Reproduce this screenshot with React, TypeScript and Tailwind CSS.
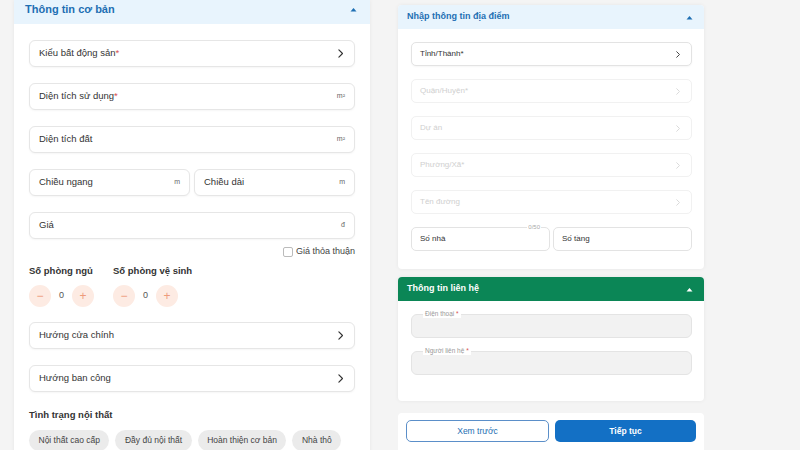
import React from 'react';

const Caret = ({ className = '' }: { className?: string }) => (
  <svg width="7" height="5" viewBox="0 0 7 5" className={className}>
    <path d="M0.5 4.5 L3.5 1 L6.5 4.5 Z" fill="currentColor" />
  </svg>
);

const Chevron = ({ className = '', size = 8 }: { className?: string; size?: number }) => (
  <svg width={size * 0.6} height={size} viewBox="0 0 6 10" className={className}>
    <path d="M1 1 L5 5 L1 9" fill="none" stroke="currentColor" strokeWidth="1.3" strokeLinecap="round" strokeLinejoin="round" />
  </svg>
);

const SelectField = ({ label, required }: { label: string; required?: boolean }) => (
  <div className="flex h-[27px] shrink-0 items-center justify-between rounded-[6px] border border-[#e6e6e6] bg-white pl-[9px] pr-[11px] shadow-[0_1px_2px_rgba(0,0,0,0.04)]">
    <span className="text-[9.5px] text-[#333]">
      {label}
      {required && <span className="text-[#d9534f]">*</span>}
    </span>
    <Chevron className="text-[#333]" size={9} />
  </div>
);

const UnitField = ({ label, unit, required, className = '' }: { label: string; unit: React.ReactNode; required?: boolean; className?: string }) => (
  <div className={`flex h-[27px] shrink-0 items-center justify-between rounded-[6px] border border-[#e6e6e6] bg-white pl-[9px] pr-[9px] shadow-[0_1px_2px_rgba(0,0,0,0.04)] ${className}`}>
    <span className="text-[9.5px] text-[#333]">
      {label}
      {required && <span className="text-[#d9534f]">*</span>}
    </span>
    <span className="text-[7px] text-[#666]">{unit}</span>
  </div>
);

const Counter = ({ label }: { label: string }) => (
  <div className="flex flex-col">
    <span className="text-[9.5px] font-semibold text-[#333]">{label}</span>
    <div className="mt-[7px] flex items-center">
      <div className="flex h-[22px] w-[22px] items-center justify-center rounded-full bg-[#fdebe3] text-[12px] leading-none text-[#ee9a7c]">−</div>
      <span className="w-[21px] text-center text-[9px] text-[#555]">0</span>
      <div className="flex h-[22px] w-[22px] items-center justify-center rounded-full bg-[#fdebe3] text-[12px] leading-none text-[#ee9a7c]">+</div>
    </div>
  </div>
);

const LocField = ({ label, disabled }: { label: string; disabled?: boolean }) => (
  <div className={`flex h-[24px] shrink-0 items-center justify-between rounded-[5px] border bg-white pl-[8px] pr-[11px] ${disabled ? 'border-[#f1f1f1]' : 'border-[#e3e3e3] shadow-[0_1px_2px_rgba(0,0,0,0.04)]'}`}>
    <span className={`text-[8px] ${disabled ? 'text-[#cfcfcf]' : 'text-[#333]'}`}>{label}</span>
    <Chevron className={disabled ? 'text-[#d6d6d6]' : 'text-[#333]'} size={7} />
  </div>
);

const ContactField = ({ label }: { label: string }) => (
  <div className="relative h-[24px] shrink-0 rounded-[6px] border border-[#e4e4e4] bg-[#f2f2f2]">
    <span className="absolute -top-[4px] left-[11px] bg-white px-[2px] text-[6.5px] leading-none text-[#999]">
      {label} <span className="text-[#d9534f]">*</span>
    </span>
  </div>
);

export default function App() {
  const chips = ['Nội thất cao cấp', 'Đầy đủ nội thất', 'Hoàn thiện cơ bản', 'Nhà thô'];

  return (
    <div className="flex h-[450px] w-[800px] items-start overflow-hidden bg-[#f4f4f4]" style={{ fontFamily: '"Liberation Sans", Arial, sans-serif' }}>
      {/* Basic info */}
      <div className="ml-[14px] flex w-[356px] shrink-0 flex-col bg-white pb-[20px] shadow-[0_0_4px_rgba(0,0,0,0.06)]">
        <div className="flex h-[24px] shrink-0 items-start justify-between bg-[#e8f4fd] pl-[11px] pr-[13px] pt-[2px]">
          <span className="text-[11px] font-bold leading-[14px] text-[#1e6fb3]">Thông tin cơ bản</span>
          <Caret className="mt-[5px] text-[#1e6fb3]" />
        </div>
        <div className="flex flex-col px-[15px] pt-[16px]">
          <div className="flex flex-col gap-[16px]">
            <SelectField label="Kiểu bất động sản" required />
            <UnitField label="Diện tích sử dụng" unit="m²" required />
            <UnitField label="Diện tích đất" unit="m²" />
            <div className="flex gap-[4px]">
              <UnitField label="Chiều ngang" unit="m" className="flex-1" />
              <UnitField label="Chiều dài" unit="m" className="flex-1" />
            </div>
            <UnitField label="Giá" unit="đ" />
          </div>
          <div className="mt-[6px] flex items-center justify-end gap-[3px]">
            <div className="h-[10px] w-[10px] rounded-[2px] border border-[#bbb] bg-white" />
            <span className="text-[9px] text-[#444]">Giá thỏa thuận</span>
          </div>
          <div className="mt-[5px] flex gap-[19px]">
            <Counter label="Số phòng ngủ" />
            <Counter label="Số phòng vệ sinh" />
          </div>
          <div className="mt-[15px] flex flex-col gap-[16px]">
            <SelectField label="Hướng cửa chính" />
            <SelectField label="Hướng ban công" />
          </div>
          <span className="mt-[16px] text-[9.5px] font-semibold text-[#333]">Tình trạng nội thất</span>
          <div className="mt-[8px] flex gap-[6px]">
            {chips.map((c) => (
              <span key={c} className="flex h-[21px] shrink-0 items-center whitespace-nowrap rounded-full bg-[#ebebeb] px-[9.5px] text-[8.5px] text-[#444]">
                {c}
              </span>
            ))}
          </div>
        </div>
      </div>

      {/* Right column */}
      <div className="ml-[28px] mt-[5px] flex w-[306px] shrink-0 flex-col">
        <div className="flex h-[264px] shrink-0 flex-col rounded-[4px] bg-white shadow-[0_0_4px_rgba(0,0,0,0.06)]">
          <div className="flex h-[24px] shrink-0 items-center justify-between rounded-t-[4px] bg-[#e8f4fd] pl-[9px] pr-[11px]">
            <span className="text-[9px] font-bold text-[#1e6fb3]">Nhập thông tin địa điểm</span>
            <Caret className="text-[#1e6fb3]" />
          </div>
          <div className="flex flex-col gap-[13px] pl-[13px] pr-[12px] pt-[13px]">
            <LocField label="Tỉnh/Thành*" />
            <LocField label="Quận/Huyện*" disabled />
            <LocField label="Dự án" disabled />
            <LocField label="Phường/Xã*" disabled />
            <LocField label="Tên đường" disabled />
            <div className="flex gap-[3px]">
              <div className="relative flex h-[24px] flex-1 items-center rounded-[5px] border border-[#e3e3e3] bg-white pl-[8px]">
                <span className="text-[8px] text-[#333]">Số nhà</span>
                <span className="absolute -top-[4px] right-[8px] bg-white px-[1px] text-[6px] leading-none text-[#aaa]">0/50</span>
              </div>
              <div className="flex h-[24px] flex-1 items-center rounded-[5px] border border-[#e3e3e3] bg-white pl-[8px]">
                <span className="text-[8px] text-[#333]">Số tầng</span>
              </div>
            </div>
          </div>
        </div>

        <div className="mt-[8px] flex h-[124px] shrink-0 flex-col rounded-[4px] bg-white shadow-[0_0_4px_rgba(0,0,0,0.06)]">
          <div className="flex h-[24px] shrink-0 items-center justify-between rounded-t-[4px] bg-[#0b8656] pl-[9px] pr-[11px]">
            <span className="text-[9px] font-bold text-white">Thông tin liên hệ</span>
            <Caret className="text-white" />
          </div>
          <div className="flex flex-col gap-[13px] pl-[13px] pr-[12px] pt-[13px]">
            <ContactField label="Điện thoại" />
            <ContactField label="Người liên hệ" />
          </div>
        </div>

        <div className="mt-[12px] flex h-[40px] shrink-0 gap-[6px] rounded-t-[4px] bg-white px-[8px] pt-[7px]">
          <button className="flex h-[22px] flex-1 items-center justify-center rounded-[5px] border border-[#5b8fc9] bg-white text-[8.5px] text-[#1e6fb3]">
            Xem trước
          </button>
          <button className="flex h-[22px] flex-1 items-center justify-center rounded-[5px] bg-[#1370c5] text-[8.5px] font-semibold text-white">
            Tiếp tục
          </button>
        </div>
      </div>
    </div>
  );
}
